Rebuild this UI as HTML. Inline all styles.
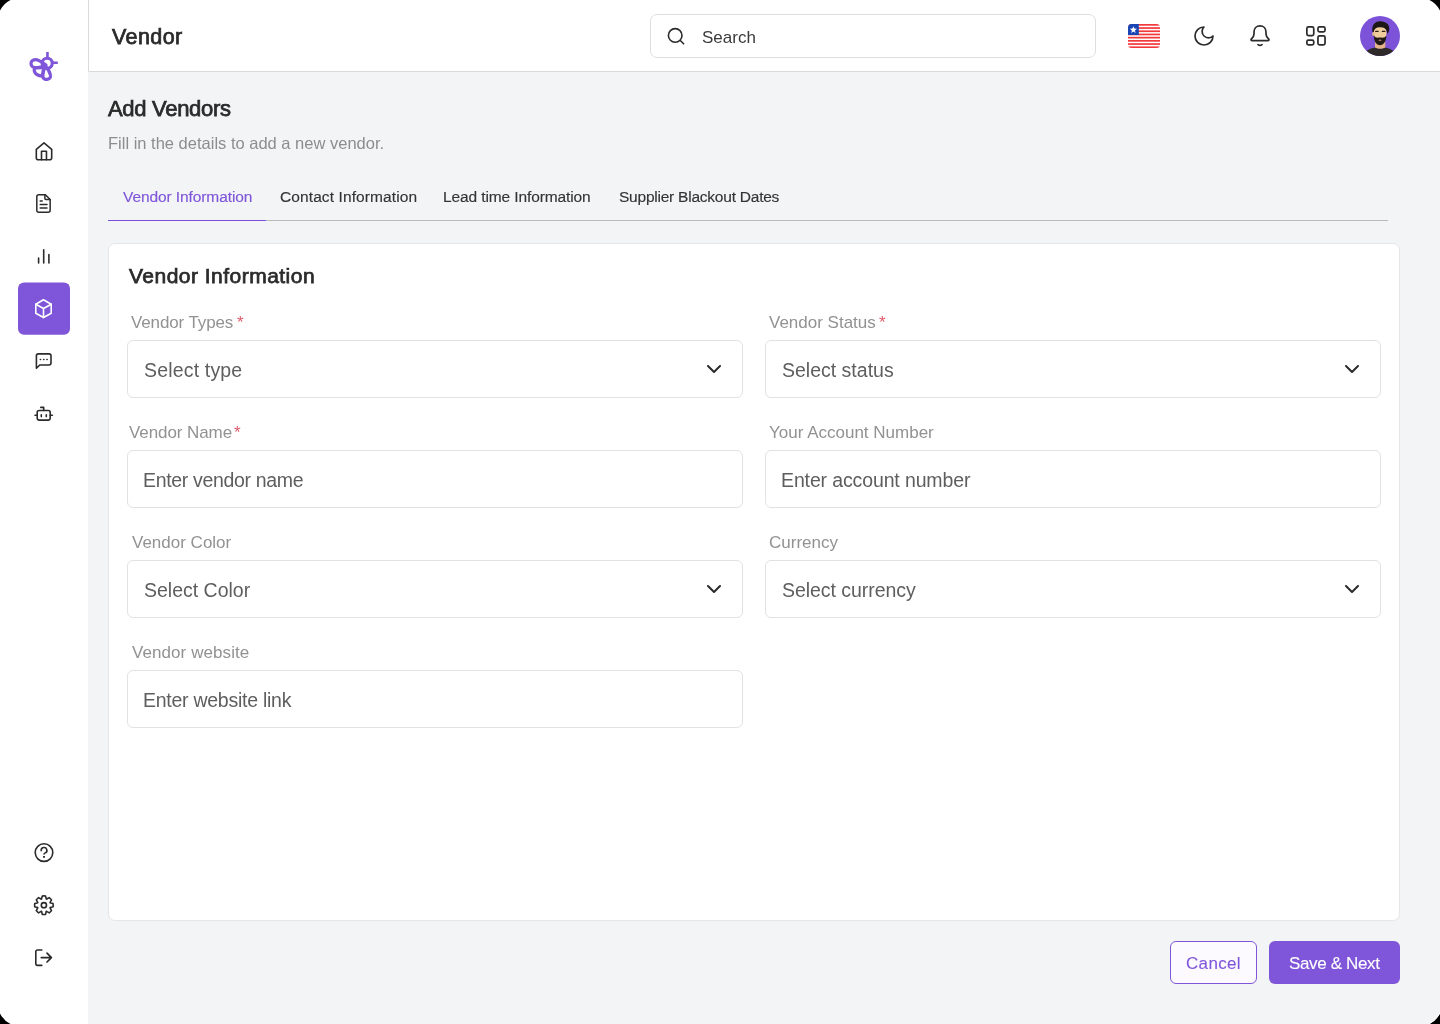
<!DOCTYPE html>
<html><head><meta charset="utf-8">
<style>
*{margin:0;padding:0;box-sizing:border-box}
html,body{width:1440px;height:1024px;overflow:hidden;background:#f2f4f6;font-family:"Liberation Sans",sans-serif}
.abs{position:absolute}
.t{position:absolute;white-space:nowrap;line-height:1;font-family:"Liberation Sans",sans-serif;will-change:transform}
.side{position:absolute;left:0;top:0;width:88px;height:1024px;background:#fff}
.head{position:absolute;left:88px;top:0;width:1352px;height:72px;background:#fff}
.search{position:absolute;left:650px;top:14px;width:446px;height:44px;border:1px solid #dedede;border-radius:7px;background:#fff}
.tabline{position:absolute;left:108px;top:220px;width:1280px;height:1px;background:#b9b9b9}
.tabact{position:absolute;left:108px;top:220px;width:158px;height:1px;background:#7b50d8}
.card{position:absolute;left:108px;top:243px;width:1292px;height:678px;background:#fff;border:1px solid #e6e6e6;border-radius:7px}
.inp{position:absolute;width:616px;height:58px;border:1px solid #e2e2e2;border-radius:6px;background:#fff}
.btn1{position:absolute;left:1170px;top:941px;width:87px;height:43px;border:1px solid #7f56d9;border-radius:6px;background:#fcfaff}
.btn2{position:absolute;left:1269px;top:941px;width:131px;height:43px;border-radius:6px;background:#7f56d9}
</style></head><body>
<div class="side"></div>
<div class="head"></div>
<div class="search"></div>
<div class="tabline"></div>
<div class="tabact"></div>
<div class="card"></div>
<div class="inp" style="left:127px;top:340px"></div><div class="inp" style="left:765px;top:340px"></div><div class="inp" style="left:127px;top:450px"></div><div class="inp" style="left:765px;top:450px"></div><div class="inp" style="left:127px;top:560px"></div><div class="inp" style="left:765px;top:560px"></div><div class="inp" style="left:127px;top:670px"></div>
<div class="btn1"></div>
<div class="btn2"></div>

<svg class="abs" style="left:0;top:0" width="88" height="1024" viewBox="0 0 88 1024" fill="none" stroke="#2b2b2b" stroke-width="1.6" stroke-linecap="round" stroke-linejoin="round">
 <!-- logo -->
 <g stroke="#7f56d9" stroke-width="3.2">
  <circle cx="47.2" cy="63.3" r="5.05"/>
  <path d="M47.45 52V57.5M53 62.75H57.8" stroke-width="2.6" stroke-linecap="butt"/>
  <path d="M46 65C42 62 38.5 59.6 35.3 59.6C32.5 59.6 30.9 61.8 31 63.8C31.1 66 33 67.8 36 67.8C39.5 67.8 43 66.5 46 65Z"/>
  <path d="M43.6 67.6H36.5C34.5 67.6 33.9 69.5 34.3 71C35.2 74.3 38.5 76 42.5 76.1C42.8 73.5 43.2 70.5 43.6 67.6Z"/>
  <path d="M45.4 66.2C44 69.5 42.6 74 42.8 76.5C43 79.2 45.8 79.6 47.2 79.4C49.5 79.1 51 77.5 50.5 75.3C50 72.5 48 69 45.4 66.2Z"/>
 </g>
 <!-- home -->
 <path d="M36.3 149.3L44 142.9L51.7 149.3V157.8Q51.7 159.8 49.7 159.8H38.3Q36.3 159.8 36.3 157.8Z"/>
 <path d="M41.5 159.8V151.2H46.45V159.8"/>
 <!-- doc -->
 <g stroke-width="1.5">
 <path d="M38.8 194.8H45.4L50.15 199.55V210.35a2 2 0 0 1-2 2H38.8a2 2 0 0 1-2-2V196.8a2 2 0 0 1 2-2Z"/>
 <path d="M44.9 195V198.6a1 1 0 0 0 1 1H50"/>
 <path d="M40.2 201H42.2M40.2 204.5H47M40.2 208H47"/>
 </g>
 <!-- chart -->
 <path d="M38.6 258V263M43.7 249.8V263M48.9 254.6V263"/>
 <!-- active bg -->
 <rect x="18" y="282.6" width="52" height="52.2" rx="6" fill="#7f56d9" stroke="none"/>
 <!-- cube -->
 <g stroke="#fff" stroke-width="1.6">
  <path d="M43.5 299.7L51.2 304.2V313.2L43.5 317.5L35.8 313.2V304.2Z"/>
  <path d="M35.8 304.2L43.5 308.5L51.2 304.2M43.5 308.5V317.5"/>
 </g>
 <!-- chat -->
 <path d="M36.4 368.3V355.9a2 2 0 0 1 2-2H49a2 2 0 0 1 2 2V363a2 2 0 0 1-2 2H39.8Z"/>
 <path d="M40.3 359.4H40.6M43.6 359.4H43.9M46.9 359.4H47.2" stroke-width="1.5"/>
 <!-- robot -->
 <rect x="37.2" y="410.5" width="13" height="9.6" rx="2"/>
 <path d="M35 415.3H37.2M50.2 415.3H52.4M43.7 410.5V407.4H40.8M41.3 414.9V416.6M46.3 414.9V416.6"/>
 <!-- help -->
 <circle cx="44" cy="852.6" r="8.8"/>
 <path d="M41.2 850.6a2.85 2.85 0 1 1 4.1 2.3c-.8.4-1.3.7-1.3 1.1"/>
 <path d="M44 856.9h.01" stroke-width="1.9" stroke-linecap="square"/>
 <!-- gear -->
 <path d="M41.68 898.35L42.29 896.04A9.3 9.3 0 0 1 45.51 896.04L46.12 898.35Q46.23 899.56 47.17 898.78L49.23 897.58A9.3 9.3 0 0 1 51.52 899.87L50.32 901.93Q49.54 902.87 50.75 902.98L53.06 903.59A9.3 9.3 0 0 1 53.06 906.81L50.75 907.42Q49.54 907.53 50.32 908.47L51.52 910.53A9.3 9.3 0 0 1 49.23 912.82L47.17 911.62Q46.23 910.84 46.12 912.05L45.51 914.36A9.3 9.3 0 0 1 42.29 914.36L41.68 912.05Q41.57 910.84 40.63 911.62L38.57 912.82A9.3 9.3 0 0 1 36.28 910.53L37.48 908.47Q38.26 907.53 37.05 907.42L34.74 906.81A9.3 9.3 0 0 1 34.74 903.59L37.05 902.98Q38.26 902.87 37.48 901.93L36.28 899.87A9.3 9.3 0 0 1 38.57 897.58L40.63 898.78Q41.57 899.56 41.68 898.35Z" stroke-width="1.6"/>
 <circle cx="43.9" cy="905.2" r="2.6" stroke-width="1.6"/>
 <!-- logout -->
 <path d="M41.8 950H37.4a1.6 1.6 0 0 0-1.6 1.6v12.2a1.6 1.6 0 0 0 1.6 1.6H41.8"/>
 <path d="M41.3 957.6H51.4M47 953.2L51.4 957.6L47 962" stroke-width="1.75"/>
</svg>

<svg class="abs" style="left:0;top:0" width="1440" height="72" viewBox="0 0 1440 72" fill="none" stroke="#2b2b2b" stroke-width="1.7" stroke-linecap="round" stroke-linejoin="round">
 <!-- search icon -->
 <circle cx="675.2" cy="35.4" r="6.8" stroke-width="1.6"/>
 <path d="M680.3 40.5L683.6 43.8" stroke-width="1.6"/>
 <!-- flag -->
 <defs><clipPath id="fc"><rect x="1128" y="24" width="32" height="24" rx="3.5"/></clipPath></defs>
 <g clip-path="url(#fc)" stroke="none">
  <rect x="1128" y="24" width="32" height="24" fill="#fff"/>
  <g fill="#f3393b"><rect x="1128" y="24.00" width="32" height="1.7"/><rect x="1128" y="27.20" width="32" height="1.7"/><rect x="1128" y="30.40" width="32" height="1.7"/><rect x="1128" y="33.60" width="32" height="1.7"/><rect x="1128" y="36.80" width="32" height="1.7"/><rect x="1128" y="40.00" width="32" height="1.7"/><rect x="1128" y="43.20" width="32" height="1.7"/><rect x="1128" y="46.40" width="32" height="1.7"/></g>
  <rect x="1128" y="24" width="10.8" height="11" fill="#1a45b4"/>
  <path d="M1133.40 26.20L1134.34 28.61L1136.92 28.76L1134.92 30.39L1135.57 32.89L1133.40 31.50L1131.23 32.89L1131.88 30.39L1129.88 28.76L1132.46 28.61Z" fill="#fff"/>
 </g>
 <!-- moon -->
 <path d="M1204 27a6 6 0 0 0 9 9 9 9 0 1 1-9-9Z"/>
 <!-- bell -->
 <path d="M1260 25.9C1256.5 25.9 1254 28.5 1254 32V34C1254 36.5 1252.8 37.5 1251.4 38.9C1250.6 39.7 1251.1 40.6 1252.2 40.6H1267.8C1268.9 40.6 1269.4 39.7 1268.6 38.9C1267.2 37.5 1266 36.5 1266 34V32C1266 28.5 1263.5 25.9 1260 25.9Z"/>
 <path d="M1258 44.6Q1260 46.2 1262 44.6"/>
 <!-- grid -->
 <rect x="1306.85" y="26.85" width="6.9" height="8.8" rx="1.6"/>
 <rect x="1306.85" y="40.15" width="6.9" height="4.7" rx="1.6"/>
 <rect x="1317.95" y="26.95" width="7.1" height="4.9" rx="1.6"/>
 <rect x="1317.95" y="35.95" width="7.1" height="8.9" rx="1.6"/>
 <!-- avatar -->
 <defs><clipPath id="av"><circle cx="1380" cy="36" r="20"/></clipPath></defs>
 <g clip-path="url(#av)" stroke="none">
  <rect x="1360" y="16" width="40" height="40" fill="#7b52d8"/>
  <path d="M1363 58C1364 51 1369 48.6 1375 47.4Q1380 49.6 1385 47.4C1391 48.6 1396 51 1397 58Z" fill="#2d2a29"/>
  <path d="M1375 41.5H1385.3V47.6Q1380.2 50 1375 47.6Z" fill="#e3b387"/>
  <ellipse cx="1380.2" cy="32.8" rx="6.4" ry="7.8" fill="#f1cd9c"/>
  <ellipse cx="1373.4" cy="34" rx="1.2" ry="2" fill="#e6bb8a"/>
  <path d="M1373.8 35.3C1373.8 41.5 1376.5 45.3 1380 45.3C1383.5 45.3 1386.3 41.5 1386.4 35.3C1385.3 37.8 1383.2 38 1380 37.6C1376.8 38 1374.8 37.8 1373.8 35.3Z" fill="#201a17"/>
  <ellipse cx="1380" cy="40.3" rx="1.5" ry=".8" fill="#b98070"/>
  <path d="M1372.4 32C1371.4 25.5 1374.5 21.5 1380 21.3C1386 21.2 1390.2 25 1389.2 30C1388.8 32 1388 33.3 1387.2 33.8C1386.8 30 1385.8 27.6 1380.5 27.3C1376.5 27.1 1374 28.6 1373.6 32Z" fill="#1d1816"/>
  <path d="M1375.6 31.3H1378.2M1382.3 31.3H1384.9" stroke="#2a1d18" stroke-width="1.2"/>
 </g>
 <!-- header border -->
 <path d="M88.5 0V71.5H1440" stroke="#d9d9d9" stroke-width="1" stroke-linecap="butt"/>
</svg>

<svg class="abs" style="left:0;top:0" width="1440" height="1024" viewBox="0 0 1440 1024" fill="none" stroke="#2b2b2b" stroke-width="2" stroke-linecap="round" stroke-linejoin="round">
 <path d="M708 366L714 372L720 366M1346 366L1352 372L1358 366M708 586L714 592L720 586M1346 586L1352 592L1358 586"/>
</svg>
<div class="t" style="left:112.20px;top:26.80px;font-size:21.5px;font-weight:400;letter-spacing:0.4px;color:#2b2b2b;-webkit-text-stroke:0.75px #2b2b2b">Vendor</div><div class="t" style="left:701.80px;top:29.01px;font-size:17px;font-weight:400;letter-spacing:0px;color:#3b3b3b;-webkit-text-stroke:0px #3b3b3b">Search</div><div class="t" style="left:108.30px;top:98.38px;font-size:22px;font-weight:400;letter-spacing:-0.3px;color:#2b2b2b;-webkit-text-stroke:0.75px #2b2b2b">Add Vendors</div><div class="t" style="left:107.90px;top:135.03px;font-size:16.5px;font-weight:400;letter-spacing:0px;color:#8d8d8d;-webkit-text-stroke:0px #8d8d8d">Fill in the details to add a new vendor.</div><div class="t" style="left:122.50px;top:188.98px;font-size:15.5px;font-weight:400;letter-spacing:-0.09px;color:#7f56d9;-webkit-text-stroke:0.15px #7f56d9">Vendor Information</div><div class="t" style="left:279.50px;top:188.98px;font-size:15.5px;font-weight:400;letter-spacing:0.1px;color:#333333;-webkit-text-stroke:0.15px #333333">Contact Information</div><div class="t" style="left:443.20px;top:188.98px;font-size:15.5px;font-weight:400;letter-spacing:-0.11px;color:#333333;-webkit-text-stroke:0.15px #333333">Lead time Information</div><div class="t" style="left:618.70px;top:188.98px;font-size:15.5px;font-weight:400;letter-spacing:-0.23px;color:#333333;-webkit-text-stroke:0.15px #333333">Supplier Blackout Dates</div><div class="t" style="left:129.00px;top:265.22px;font-size:21px;font-weight:400;letter-spacing:0.48px;color:#2b2b2b;-webkit-text-stroke:0.75px #2b2b2b">Vendor Information</div><div class="t" style="left:131.40px;top:313.61px;font-size:17px;font-weight:400;letter-spacing:-0.12px;color:#929292;-webkit-text-stroke:0px #929292">Vendor Types</div><div class="t" style="left:769.40px;top:313.61px;font-size:17px;font-weight:400;letter-spacing:0px;color:#929292;-webkit-text-stroke:0px #929292">Vendor Status</div><div class="t" style="left:128.60px;top:423.61px;font-size:17px;font-weight:400;letter-spacing:-0.08px;color:#929292;-webkit-text-stroke:0px #929292">Vendor Name</div><div class="t" style="left:769.00px;top:423.61px;font-size:17px;font-weight:400;letter-spacing:0px;color:#929292;-webkit-text-stroke:0px #929292">Your Account Number</div><div class="t" style="left:131.80px;top:533.61px;font-size:17px;font-weight:400;letter-spacing:0px;color:#929292;-webkit-text-stroke:0px #929292">Vendor Color</div><div class="t" style="left:768.70px;top:533.61px;font-size:17px;font-weight:400;letter-spacing:0px;color:#929292;-webkit-text-stroke:0px #929292">Currency</div><div class="t" style="left:131.80px;top:643.61px;font-size:17px;font-weight:400;letter-spacing:0.08px;color:#929292;-webkit-text-stroke:0px #929292">Vendor website</div><div class="t" style="left:143.80px;top:361.49px;font-size:19.5px;font-weight:400;letter-spacing:0.17px;color:#5e5e5e;-webkit-text-stroke:0px #5e5e5e">Select type</div><div class="t" style="left:781.90px;top:361.49px;font-size:19.5px;font-weight:400;letter-spacing:0px;color:#5e5e5e;-webkit-text-stroke:0px #5e5e5e">Select status</div><div class="t" style="left:143.20px;top:471.49px;font-size:19.5px;font-weight:400;letter-spacing:-0.33px;color:#5e5e5e;-webkit-text-stroke:0px #5e5e5e">Enter vendor name</div><div class="t" style="left:781.00px;top:471.49px;font-size:19.5px;font-weight:400;letter-spacing:-0.13px;color:#5e5e5e;-webkit-text-stroke:0px #5e5e5e">Enter account number</div><div class="t" style="left:144.00px;top:581.49px;font-size:19.5px;font-weight:400;letter-spacing:0px;color:#5e5e5e;-webkit-text-stroke:0px #5e5e5e">Select Color</div><div class="t" style="left:781.90px;top:581.49px;font-size:19.5px;font-weight:400;letter-spacing:-0.04px;color:#5e5e5e;-webkit-text-stroke:0px #5e5e5e">Select currency</div><div class="t" style="left:143.00px;top:691.49px;font-size:19.5px;font-weight:400;letter-spacing:-0.26px;color:#5e5e5e;-webkit-text-stroke:0px #5e5e5e">Enter website link</div><div class="t" style="left:1186.10px;top:955.21px;font-size:17px;font-weight:400;letter-spacing:0.34px;color:#7f56d9;-webkit-text-stroke:0.1px #7f56d9">Cancel</div><div class="t" style="left:1288.90px;top:955.21px;font-size:17px;font-weight:400;letter-spacing:-0.36px;color:#ffffff;-webkit-text-stroke:0.1px #ffffff">Save &amp; Next</div><div class="t" style="left:236.90px;top:313.61px;font-size:17px;color:#e25b6c">*</div><div class="t" style="left:879.10px;top:313.61px;font-size:17px;color:#e25b6c">*</div><div class="t" style="left:234.40px;top:423.61px;font-size:17px;color:#e25b6c">*</div>

<svg class="abs" style="left:0;top:0;z-index:50" width="1440" height="1024" viewBox="0 0 1440 1024" stroke="none" fill="#000">
 <path d="M0 0H10.5Q3.5 3.5 0 10.5Z"/>
 <path d="M1440 0H1429.5Q1436.5 3.5 1440 10.5Z"/>
 <path d="M0 1024H10.5Q3.5 1020.5 0 1013.5Z"/>
 <path d="M1440 1024H1429.5Q1436.5 1020.5 1440 1013.5Z"/>
 <path d="M1429 1024Q1436.2 1020.2 1440 1013" fill="none" stroke="#fff" stroke-width="1"/>
</svg>
</body></html>
